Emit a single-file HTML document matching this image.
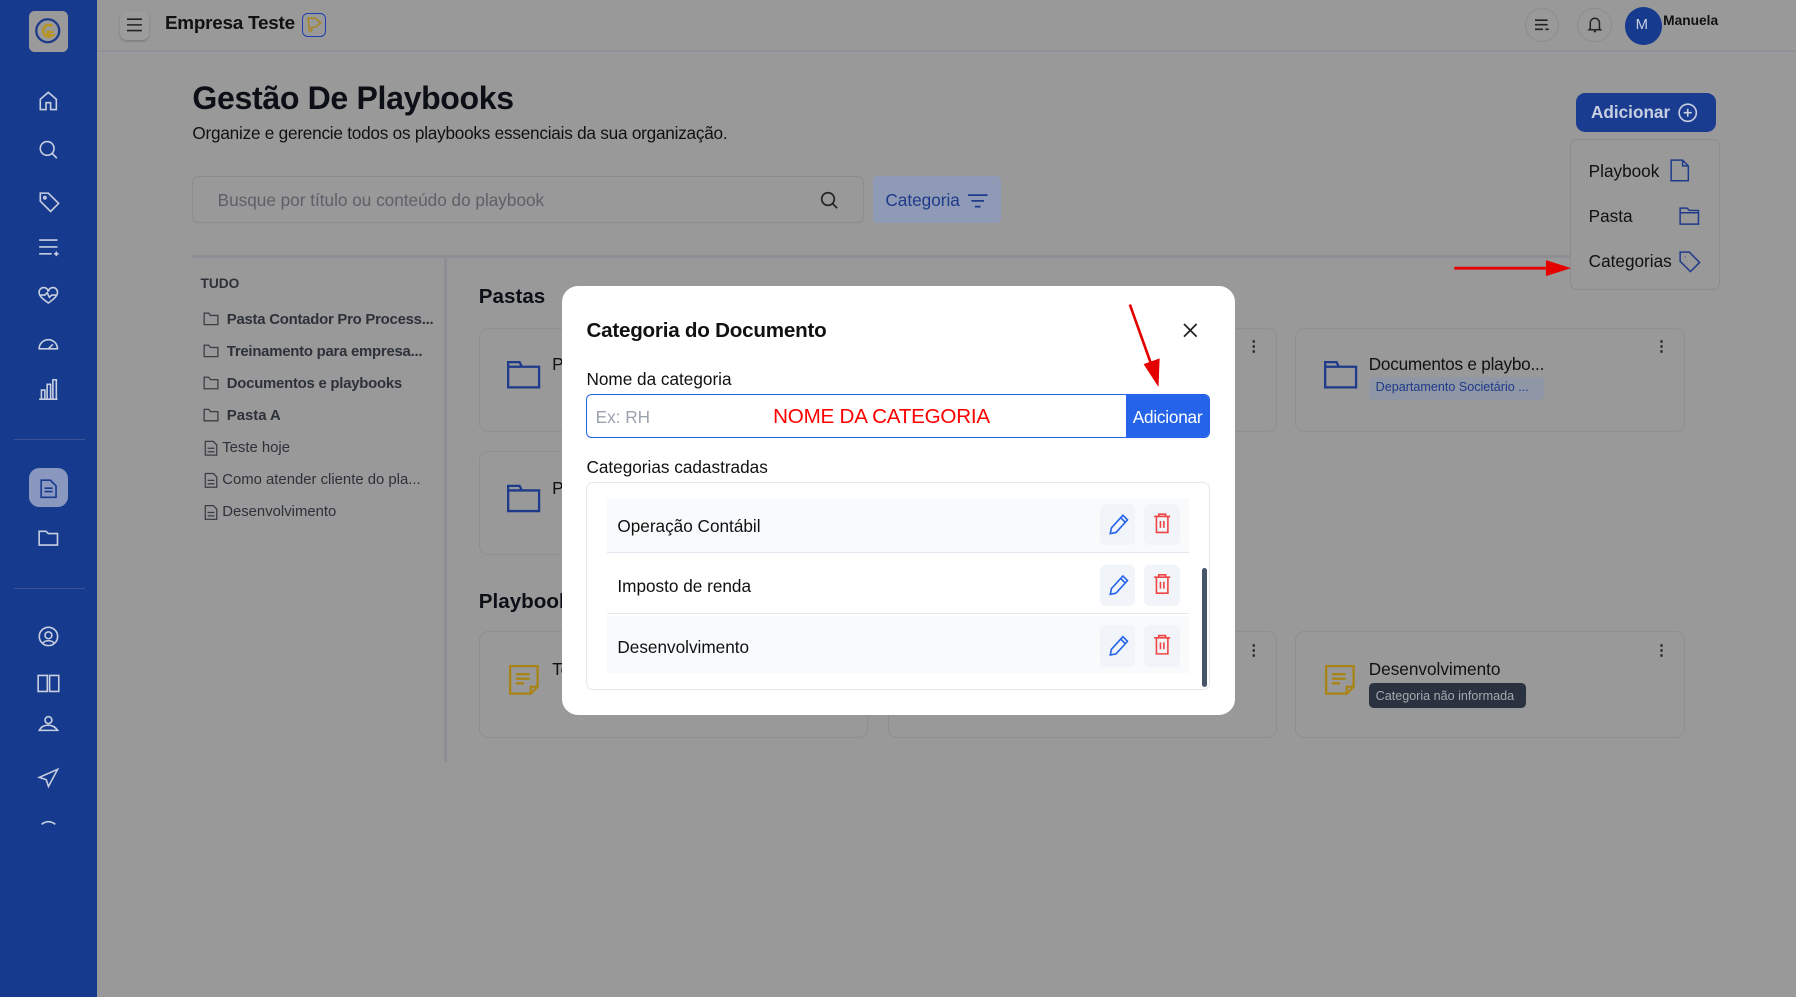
<!DOCTYPE html>
<html><head><meta charset="utf-8"><style>
html,body{margin:0;padding:0;width:1796px;height:996px;overflow:hidden;background:#999;}
#w{position:absolute;left:0;top:0;width:1568px;height:870px;zoom:1.14541;background:#999;font-family:"Liberation Sans",sans-serif;color:#111827;}
.a{position:absolute;}
.t{position:absolute;white-space:nowrap;line-height:1;}
.card{position:absolute;border:1px solid #8d8f94;border-radius:8px;background:#999;}
.ico{position:absolute;}
svg{overflow:visible}
</style></head><body><div id="w">
<!-- sidebar -->
<div class="a" style="left:0;top:0;width:85px;height:870px;background:#163a8e"></div>
<div class="a" style="left:25px;top:10px;width:34px;height:35px;background:#9a9a9a;border-radius:5px"></div>
<svg class="ico" style="left:30px;top:15px" width="24" height="24" viewBox="0 0 24 24"><circle cx="12" cy="12" r="10" fill="none" stroke="#1e3a8a" stroke-width="2"/><path d="M16 8a5 5 0 1 0 0 8h-4v-3h5" fill="none" stroke="#b8951f" stroke-width="2.2"/></svg>
<svg class="ico" style="left:33px;top:79px" width="18" height="350" viewBox="0 0 18 350" fill="none" stroke="#c7cfe0" stroke-width="1.4">
<path d="M2 8l7-6 7 6v9h-5v-6H7v6H2z"/>
<circle cx="8" cy="51" r="6"/><path d="M12.5 55.5l4 4"/>
<path d="M2 90v7l9 9 7-7-9-9z"/><circle cx="6" cy="94" r="1"/>
<path d="M1 131h16M1 137h16M1 143h11M14 143h4M16 141v4"/>
<path d="M9 186c-4-3-8-6-8-9a4 4 0 0 1 8-1 4 4 0 0 1 8 1c0 3-4 6-8 9zM2 179h4l2-2 2 4 2-2h4"/>
<path d="M1 226a8 8 0 0 1 16 0zM9 226l4-4"/>
<path d="M1 270h16M3 270v-8h3v8M8 270v-13h3v13M13 270v-17h3v17"/>
</svg>
<div class="a" style="left:12px;top:383px;width:62px;height:1px;background:#3a5296"></div>
<div class="a" style="left:25px;top:409px;width:34px;height:34px;background:#8a98bf;border-radius:9px"></div>
<svg class="ico" style="left:35px;top:418px" width="15" height="17" fill="none" stroke="#163a8e" stroke-width="1.4"><path d="M1 1h8l5 5v10H1zM4 8h7M4 11h7"/></svg>
<svg class="ico" style="left:33px;top:462px" width="18" height="16" fill="none" stroke="#c7cfe0" stroke-width="1.4"><path d="M1 2h6l2 2h8v10H1z"/></svg>
<div class="a" style="left:12px;top:513px;width:62px;height:1px;background:#3a5296"></div>
<svg class="ico" style="left:32px;top:546px" width="20" height="180" fill="none" stroke="#c7cfe0" stroke-width="1.4">
<circle cx="10" cy="10" r="8"/><circle cx="10" cy="9" r="3"/><path d="M5 16c2-3 8-3 10 0"/>
<path d="M1 44h8v14H1zM11 44h8v14h-8z"/>
<path d="M2 92c3-6 12-6 16 0zM7 83a3 3 0 1 0 6 0 3 3 0 1 0-6 0"/>
<path d="M18 126L2 133l6 2 2 6z"/>
<path d="M4 174c4-3 8-3 12 0"/>
</svg>
<!-- header -->
<div class="a" style="left:85px;top:44px;width:1483px;height:1px;background:#8f929a"></div>
<div class="a" style="left:105px;top:10px;width:25px;height:25px;background:#9c9c9c;border-radius:6px;box-shadow:0 1px 2px rgba(0,0,0,.2)"></div>
<svg class="ico" style="left:111px;top:16px" width="13" height="12" stroke="#222" stroke-width="1.4"><path d="M0 1h13M0 6h13M0 11h13"/></svg>
<div class="t" style="left:144px;top:13px;font-size:16.5px;font-weight:bold;color:#111;letter-spacing:-0.2px">Empresa Teste</div>
<div class="a" style="left:264px;top:11px;width:21px;height:21px;border:1px solid #1e40af;border-radius:5px;box-sizing:border-box"></div>
<svg class="ico" style="left:268px;top:15px" width="13" height="13" fill="none" stroke="#a88315" stroke-width="1.2"><path d="M1 1h6l5 4-5 4H4v3H2z"/></svg>
<div class="a" style="left:1331px;top:7px;width:30px;height:30px;border:1px solid #8c8c8c;border-radius:50%;box-sizing:border-box"></div>
<svg class="ico" style="left:1340px;top:17px" width="12" height="10" stroke="#222" stroke-width="1.4"><path d="M0 1h11M0 5h11M0 9h7M9 9h3"/></svg>
<div class="a" style="left:1377px;top:7px;width:30px;height:30px;border:1px solid #8c8c8c;border-radius:50%;box-sizing:border-box"></div>
<svg class="ico" style="left:1386px;top:14px" width="12" height="15" fill="none" stroke="#222" stroke-width="1.3"><path d="M2 11V6a4 4 0 0 1 8 0v5l1 1H1zM5 13.5h2"/></svg>
<div class="a" style="left:1419px;top:6px;width:32px;height:33px;background:#163a8e;border-radius:50%"></div>
<div class="t" style="left:1428px;top:16px;font-size:13px;color:#c7cfe0">M</div>
<div class="t" style="left:1452px;top:12px;font-size:12px;font-weight:bold;color:#111">Manuela</div>
<!-- title -->
<div class="t" style="left:168px;top:72px;font-size:28px;font-weight:bold;color:#0c0f16;letter-spacing:-0.3px">Gestão De Playbooks</div>
<div class="t" style="left:168px;top:109px;font-size:15px;color:#111;letter-spacing:-0.2px">Organize e gerencie todos os playbooks essenciais da sua organização.</div>
<div class="a" style="left:1376px;top:81px;width:122px;height:34px;background:#193c91;border-radius:8px"></div>
<div class="t" style="left:1389px;top:91px;font-size:15px;font-weight:bold;color:#c7cfe0">Adicionar</div>
<svg class="ico" style="left:1465px;top:90px" width="17" height="17" fill="none" stroke="#c7cfe0" stroke-width="1.4"><circle cx="8.5" cy="8.5" r="7.5"/><path d="M8.5 5v7M5 8.5h7"/></svg>
<!-- search -->
<div class="a" style="left:168px;top:154px;width:586px;height:41px;border:1px solid #8c8c8c;border-radius:6px;box-sizing:border-box"></div>
<div class="t" style="left:190px;top:168px;font-size:15px;color:#5e6068">Busque por título ou conteúdo do playbook</div>
<svg class="ico" style="left:716px;top:167px" width="16" height="16" fill="none" stroke="#222" stroke-width="1.5"><circle cx="7" cy="7" r="5.5"/><path d="M11 11l4 4"/></svg>
<div class="a" style="left:762px;top:154px;width:112px;height:41px;background:#8e9ab6;border-radius:4px"></div>
<div class="t" style="left:773px;top:168px;font-size:15px;color:#1e3a8a">Categoria</div>
<svg class="ico" style="left:845px;top:169px" width="17" height="12" stroke="#1e3a8a" stroke-width="1.5"><path d="M0 1h17M3 6h11M6 11h5"/></svg>
<div class="a" style="left:168px;top:223px;width:1334px;height:2px;background:#8d8f94"></div>
<div class="a" style="left:388px;top:225px;width:2px;height:440px;background:#8d8f94"></div>
<!-- dropdown -->
<div class="a" style="left:1371px;top:121px;width:131px;height:132px;border:1px solid #8c8c8c;border-radius:6px;box-sizing:border-box;background:#999"></div>
<div class="t" style="left:1387px;top:142px;font-size:15px;color:#111">Playbook</div>
<svg class="ico" style="left:1458px;top:139px" width="18" height="20" fill="none" stroke="#1e3a8a" stroke-width="1.3"><path d="M1 1h10l5 5v13H1zM11 1v5h5"/></svg>
<div class="t" style="left:1387px;top:182px;font-size:15px;color:#111">Pasta</div>
<svg class="ico" style="left:1466px;top:181px" width="18" height="16" fill="none" stroke="#1e3a8a" stroke-width="1.3"><path d="M1 1h6l2 2h8v12H1zM1 5h16"/></svg>
<div class="t" style="left:1387px;top:221px;font-size:15px;color:#111">Categorias</div>
<svg class="ico" style="left:1466px;top:219px" width="20" height="20" fill="none" stroke="#1e3a8a" stroke-width="1.3"><path d="M1 1h8l9 9-8 8-9-9zM5 5h.5"/></svg>
<svg class="ico" style="left:1268px;top:226px" width="106" height="16"><path d="M2 8h80" stroke="#e50000" stroke-width="2.5"/><path d="M82 1l22 7-22 7z" fill="#e50000"/></svg>
<!-- tree -->
<div class="t" style="left:175px;top:242px;font-size:12px;font-weight:bold;color:#2d3138">TUDO</div>
<div class="t" style="left:198px;top:273px;font-size:13px;font-weight:bold;color:#2d3138;letter-spacing:-0.2px">Pasta Contador Pro Process...</div>
<div class="t" style="left:198px;top:301px;font-size:13px;font-weight:bold;color:#2d3138;letter-spacing:-0.2px">Treinamento para empresa...</div>
<div class="t" style="left:198px;top:329px;font-size:13px;font-weight:bold;color:#2d3138;letter-spacing:-0.2px">Documentos e playbooks</div>
<div class="t" style="left:198px;top:357px;font-size:13px;font-weight:bold;color:#2d3138">Pasta A</div>
<div class="t" style="left:194px;top:385px;font-size:13px;color:#2d3138">Teste hoje</div>
<div class="t" style="left:194px;top:413px;font-size:13px;color:#2d3138">Como atender cliente do pla...</div>
<div class="t" style="left:194px;top:441px;font-size:13px;color:#2d3138">Desenvolvimento</div>
<svg class="ico" style="left:177px;top:272px" width="14" height="180" fill="none" stroke="#3a3d44" stroke-width="1.1"><path d="M1 1h4l1.5 2H13v8H1zM1 29h4l1.5 2H13v8H1zM1 57h4l1.5 2H13v8H1zM1 85h4l1.5 2H13v8H1zM2 113h7l3 3v9H2zM4 119h6M4 122h6M2 141h7l3 3v9H2zM4 147h6M4 150h6M2 169h7l3 3v9H2zM4 175h6M4 178h6"/></svg>
<!-- cards -->
<div class="t" style="left:418px;top:251px;font-size:18px;font-weight:bold;color:#0c0f16">Pastas</div>
<div class="card" style="left:418px;top:286px;width:338px;height:89px"></div>
<div class="card" style="left:775px;top:286px;width:338px;height:89px"></div>
<div class="card" style="left:1131px;top:286px;width:338px;height:89px"></div>
<div class="card" style="left:418px;top:394px;width:338px;height:89px"></div>
<svg class="ico" style="left:443px;top:315px" width="30" height="140" fill="none" stroke="#1e3a8a" stroke-width="2"><path d="M1 1h10l2 4h15v18H1zM1 5h12M1 109h10l2 4h15v18H1zM1 113h12"/></svg>
<div class="t" style="left:482px;top:311px;font-size:15px;color:#111">P.</div>
<div class="t" style="left:482px;top:419px;font-size:15px;color:#111">P.</div>
<svg class="ico" style="left:1156px;top:315px" width="30" height="25" fill="none" stroke="#1e3a8a" stroke-width="2"><path d="M1 1h10l2 4h15v18H1zM1 5h12"/></svg>
<div class="t" style="left:1195px;top:311px;font-size:15px;color:#111;letter-spacing:-0.2px">Documentos e playbo...</div>
<div class="a" style="left:1195px;top:329px;width:153px;height:20px;background:#8f96a6;border-radius:4px"></div>
<div class="t" style="left:1201px;top:333px;font-size:11px;color:#1e3a8a">Departamento Societário ...</div>
<div class="t" style="left:1444px;top:297px;font-size:13px;color:#222;font-weight:bold">⋮</div>
<div class="t" style="left:1088px;top:297px;font-size:13px;color:#222;font-weight:bold">⋮</div>
<div class="t" style="left:418px;top:517px;font-size:18px;font-weight:bold;color:#0c0f16">Playbooks</div>
<div class="card" style="left:418px;top:551px;width:338px;height:92px"></div>
<div class="card" style="left:775px;top:551px;width:338px;height:92px"></div>
<div class="card" style="left:1131px;top:551px;width:338px;height:92px"></div>
<svg class="ico" style="left:444px;top:581px" width="28" height="28" fill="none" stroke="#a88315" stroke-width="2"><path d="M1 1h24v18l-6 6H1zM19 25v-6h6M6 8h12M6 12h12M6 16h7"/></svg>
<div class="t" style="left:482px;top:577px;font-size:15px;color:#111">Te</div>
<svg class="ico" style="left:1157px;top:581px" width="28" height="28" fill="none" stroke="#a88315" stroke-width="2"><path d="M1 1h24v18l-6 6H1zM19 25v-6h6M6 8h12M6 12h12M6 16h7"/></svg>
<div class="t" style="left:1195px;top:577px;font-size:15px;color:#111">Desenvolvimento</div>
<div class="a" style="left:1195px;top:596px;width:137px;height:22px;background:#2b323f;border-radius:4px"></div>
<div class="t" style="left:1201px;top:602px;font-size:11px;color:#a6a8ad">Categoria não informada</div>
<div class="t" style="left:1444px;top:562px;font-size:13px;color:#222;font-weight:bold">⋮</div>
<div class="t" style="left:1088px;top:562px;font-size:13px;color:#222;font-weight:bold">⋮</div>
<!-- modal -->
<div class="a" style="left:491px;top:250px;width:587px;height:374px;background:#fff;border-radius:14px"></div>
<div class="t" style="left:512px;top:280px;font-size:18px;font-weight:bold;color:#111;letter-spacing:-0.2px">Categoria do Documento</div>
<svg class="ico" style="left:1034px;top:283px" width="11" height="11" stroke="#222" stroke-width="1.5"><path d="M0 0l11 11M11 0L0 11"/></svg>
<svg class="ico" style="left:980px;top:262px" width="36" height="80"><path d="M6 4l20 56" stroke="#e50000" stroke-width="2.3"/><path d="M18 56l14-5-1 25z" fill="#e50000"/></svg>
<div class="t" style="left:512px;top:324px;font-size:15px;color:#111">Nome da categoria</div>
<div class="a" style="left:512px;top:344px;width:544px;height:38px;border:1.5px solid #2563eb;border-radius:5px;box-sizing:border-box;overflow:hidden"><div class="a" style="right:0;top:0;width:72px;height:38px;background:#2563eb"></div></div>
<div class="t" style="left:520px;top:357px;font-size:15px;color:#9ca3af">Ex: RH</div>
<div class="t" style="left:675px;top:355px;font-size:18px;color:#ff0000;letter-spacing:-0.2px">NOME DA CATEGORIA</div>
<div class="t" style="left:989px;top:357px;font-size:15px;color:#fff;letter-spacing:-0.2px">Adicionar</div>
<div class="t" style="left:512px;top:401px;font-size:15px;color:#111">Categorias cadastradas</div>
<div class="a" style="left:512px;top:421px;width:544px;height:181px;border:1px solid #e5e7eb;border-radius:6px;box-sizing:border-box"></div>
<div class="a" style="left:530px;top:435px;width:508px;height:47px;background:#f8fafc"></div>
<div class="a" style="left:530px;top:482px;width:508px;height:1px;background:#e2e8f0"></div>
<div class="a" style="left:530px;top:535px;width:508px;height:1px;background:#e2e8f0"></div>
<div class="a" style="left:530px;top:538px;width:508px;height:50px;background:#f8fafc"></div>
<div class="t" style="left:539px;top:452px;font-size:15px;color:#111">Operação Contábil</div>
<div class="t" style="left:539px;top:505px;font-size:15px;color:#111">Imposto de renda</div>
<div class="t" style="left:539px;top:558px;font-size:15px;color:#111">Desenvolvimento</div>
<div class="a" style="left:1049px;top:496px;width:5px;height:104px;background:#475569;border-radius:3px"></div>
<div class="a" style="left:960px;top:440px;width:31px;height:36px;background:#f1f5f9;border-radius:5px"></div>
<div class="a" style="left:999px;top:440px;width:31px;height:36px;background:#f1f5f9;border-radius:5px"></div>
<div class="a" style="left:960px;top:493px;width:31px;height:36px;background:#f1f5f9;border-radius:5px"></div>
<div class="a" style="left:999px;top:493px;width:31px;height:36px;background:#f1f5f9;border-radius:5px"></div>
<div class="a" style="left:960px;top:546px;width:31px;height:36px;background:#f1f5f9;border-radius:5px"></div>
<div class="a" style="left:999px;top:546px;width:31px;height:36px;background:#f1f5f9;border-radius:5px"></div>
<svg class="ico" style="left:967px;top:448px" width="20" height="130" fill="none" stroke="#2563eb" stroke-width="1.4"><path d="M2 18l1-5 10-11 4 4-10 11zM11 4l4 4M2 71l1-5 10-11 4 4-10 11zM11 57l4 4M2 124l1-5 10-11 4 4-10 11zM11 110l4 4"/></svg>
<svg class="ico" style="left:1007px;top:448px" width="16" height="130" fill="none" stroke="#ef4444" stroke-width="1.4"><path d="M1 3h14M5 3V1h6v2M3 3v14h10V3M6.5 7v6M9.5 7v6M1 56h14M5 56v-2h6v2M3 56v14h10V56M6.5 60v6M9.5 60v6M1 109h14M5 109v-2h6v2M3 109v14h10V109M6.5 113v6M9.5 113v6"/></svg>
</div></body></html>
